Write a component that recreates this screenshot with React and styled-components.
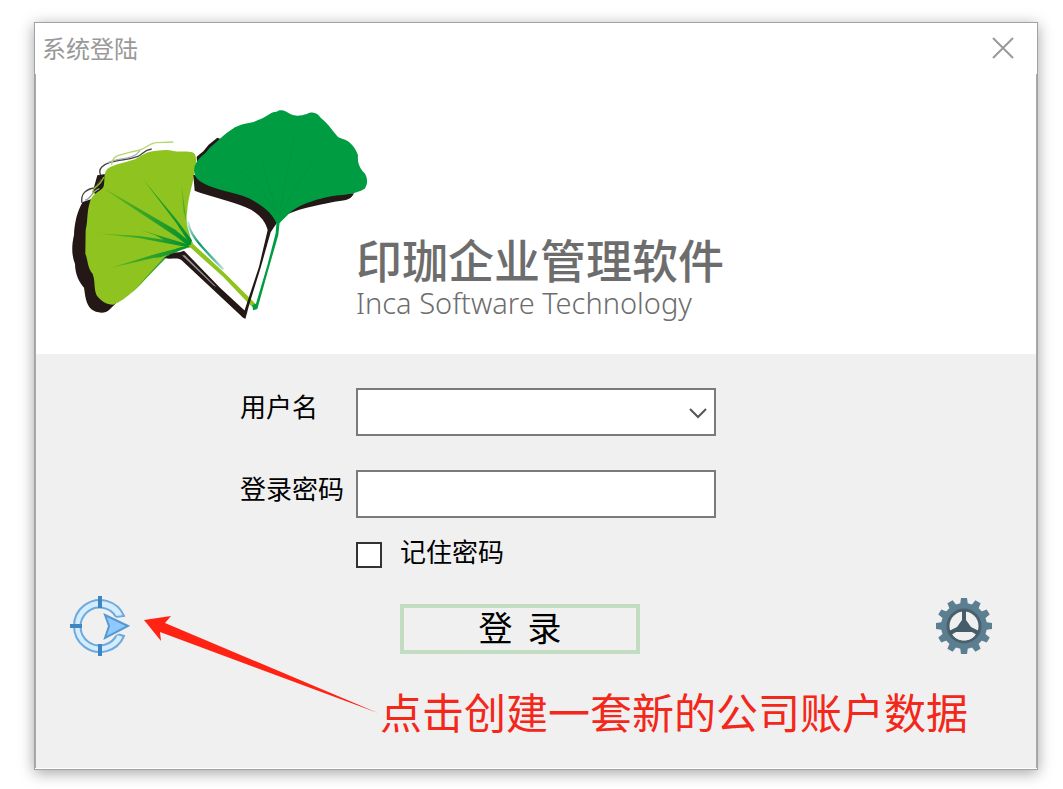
import React from "react";
import styled, { createGlobalStyle } from "styled-components";

const GlobalStyle = createGlobalStyle`
  *, *::before, *::after { box-sizing: border-box; }
  body {
    margin: 0;
    background: #fff;
    font-family: "Noto Sans CJK SC", sans-serif;
  }
`;

const Page = styled.main`
  padding: 22px 25px 19px 34px;
`;

const Dialog = styled.section`
  border: 1px solid #a2a4a4;
  background: #fff;
  box-shadow: 0 3px 14px rgba(0, 0, 0, 0.36);
`;

const TitleBar = styled.header`
  display: flex;
  align-items: center;
  justify-content: space-between;
  height: 51px;
  padding: 0 22px 2px 7px;
`;

const WindowTitle = styled.h1`
  margin: 0;
  font-size: 24px;
  line-height: 32px;
  font-weight: 400;
  color: #999;
`;

const CloseButton = styled.button`
  display: flex;
  padding: 0;
  border: 0;
  background: none;
  color: #999;
`;

const Body = styled.div`
  border: solid #a9a9a9;
  border-width: 0 1px;
  margin-bottom: 1px;
`;

const Banner = styled.div`
  display: flex;
  height: 280px;
  padding: 26px 0 0 32px;
`;

const Logo = styled.svg`
  flex: none;
  width: 288px;
  height: 230px;
  overflow: visible;
`;

const Brand = styled.div`
  padding-top: 132px;
  white-space: nowrap;
`;

const BrandName = styled.p`
  margin: 0;
  font-size: 46px;
  line-height: 52px;
  font-weight: 500;
  color: #6d6d6d;
`;

const BrandSub = styled.p`
  margin: 0;
  font-family: "Noto Sans", sans-serif;
  font-size: 29px;
  line-height: 38px;
  font-weight: 300;
  color: #6d6d6d;
`;

const LoginForm = styled.form`
  background: #f0f0f0;
  padding: 34px 0 28px;
`;

const Fields = styled.div`
  display: grid;
  grid-template-columns: 116px 360px;
  row-gap: 34px;
  padding-left: 204px;
`;

const Label = styled.label`
  font-size: 26px;
  line-height: 36px;
  color: #000;
  white-space: nowrap;
`;

const SelectWrap = styled.div`
  position: relative;
`;

const Chevron = styled.svg`
  position: absolute;
  right: 8px;
  top: 18px;
  pointer-events: none;
`;

const Control = styled.input`
  display: block;
  width: 100%;
  height: 48px;
  padding: 0 12px;
  border: 2px solid #7a7a7a;
  border-radius: 0;
  background: #fff;
  font: inherit;
  font-size: 26px;
  appearance: none;
`;

const Remember = styled.div`
  display: flex;
  gap: 18px;
  padding: 22px 0 0 320px;
`;

const Checkbox = styled.input`
  appearance: none;
  width: 26px;
  height: 26px;
  margin: 2px 0 0;
  border: 2px solid #333;
  background: #fff;
  &:checked { background: #333; }
`;

const RememberLabel = styled(Label)`
  line-height: 22px;
`;

const Actions = styled.div`
  display: flex;
  align-items: center;
  padding: 28px 44px 0 34px;
`;

const IconButton = styled.button`
  display: flex;
  padding: 0;
  border: 0;
  background: none;
  margin-left: ${(p) => (p.$end ? "auto" : "0")};
`;

const LoginButton = styled.button`
  width: 240px;
  height: 50px;
  margin: 6px 0 0 270px;
  padding: 0 0 4px;
  border: 4px solid #c1dcc1;
  background: #f0f0f0;
  font-family: inherit;
  font-size: 34px;
  line-height: 38px;
  color: #000;
  white-space: pre;
`;

const Note = styled.div`
  position: relative;
  padding: 26px 0 0 344px;
`;

const NoteText = styled.p`
  margin: 0;
  font-size: 42px;
  line-height: 58px;
  color: #f3271a;
  white-space: nowrap;
`;

const Arrow = styled.svg`
  position: absolute;
  left: 108px;
  top: -40px;
  pointer-events: none;
`;

function GinkgoLogo() {
  return (
    <Logo viewBox="24 0 864 690" role="img" aria-label="Inca">
      <defs>
        <linearGradient id="teal" gradientUnits="userSpaceOnUse" x1="385" y1="370" x2="500" y2="520">
          <stop offset="0" stopColor="#bfe6dc" />
          <stop offset=".35" stopColor="#00996b" />
          <stop offset=".7" stopColor="#5bbba5" />
          <stop offset="1" stopColor="#e5f5f0" />
        </linearGradient>
        <linearGradient id="veinLeft" gradientUnits="userSpaceOnUse" x1="100" y1="0" x2="390" y2="0">
          <stop offset="0" stopColor="#8fc31f" />
          <stop offset=".35" stopColor="#4cac26" />
          <stop offset="1" stopColor="#00912f" />
        </linearGradient>
      </defs>
      {/* shadow of the light leaf */}
      <path fill="#231815" d="M68 306 C52 332 43 370 42 405 C35 435 34 465 45 492 C46 525 57 545 72 563 C76 590 78 612 94 628 C107 639 136 643 148 629 L168 610 L110 560 L80 450 L85 340 L97 296 L86 300 Z" />
      <path fill="#231815" d="M112 226 L137 222 L134 255 L126 276 L110 285 L98 276 Z" />
      <g fill="none" stroke="#444" strokeWidth="4">
        <path d="M122 225 C112 205 132 193 150 187 C180 178 205 180 232 170 C248 164 250 150 275 147" />
        <path d="M145 188 C175 172 220 181 239 153" stroke="#aaa" />
        <path d="M66 309 C61 281 78 267 104 264 L124 238" />
        <path d="M75 300 C92 300 93 275 118 266" stroke="#999" />
      </g>
      <g fill="none" stroke="#b5d86a" strokeWidth="4">
        <path d="M155 195 C157 162 184 166 205 158 L240 150 C258 145 270 128 290 128 L340 126" />
        <path d="M98 283 C98 255 116 267 132 231" stroke="#8fc31f" />
      </g>
      {/* light leaf */}
      <path fill="#8fc31f" d="M138 212 C150 194 185 192 215 181 C240 174 248 160 270 155 C300 151 320 147 340 153 C360 157 380 151 397 157 C411 162 410 185 404 210 C402 245 384 290 382 330 C375 370 384 402 404 440 C370 446 340 454 313 471 C286 500 251 549 220 574 C200 591 181 607 160 614 C139 614 121 602 109 584 C101 563 106 542 98 522 C81 501 85 484 76 461 L77 390 C84 362 80 335 90 305 C96 281 118 277 130 262 C136 245 130 224 138 212 Z" />
      <g fill="url(#veinLeft)">
        <path d="M138 268 L346 389 L394 430 L388 440 L350 411 L138 271 Z" />
        <path d="M90 398 L240 408 L310 419 L285 405 L240 389 L390 435 L380 441 L240 415 Z" />
        <path d="M147 505 L290 461 L390 436 L330 462 L302 472 L280 474 Z" />
        <path d="M248 236 L350 359 L396 421 L391 434 L348 368 Z" />
        <path d="M364 254 L373 315 L384 397 L396 429 L371 335 Z" opacity=".45" />
        <path d="M313 471 L353 444 L399 436 L326 466 L295 497 L210 585 Z" />
      </g>
      {/* shadow of the light leaf's stem */}
      <path fill="#231815" d="M313 474 C330 461 345 456 358 457 L372 452 L480 563 L553 631 L562 636 L551 655 L364 480 C350 471 333 480 313 474 Z" />
      <path fill="#9d9997" d="M374 466 L470 562 L460 556 L366 466 Z" />
      <path stroke="url(#teal)" strokeWidth="7" fill="none" d="M384 365 C389 399 404 421 490 508" />
      <path fill="#8fc31f" d="M385 436 L402 434 L500 525 L590 615 L587 628 L570 615 L490 531 L397 448 Z" />
      {/* shadow of the dark leaf and its stem */}
      <path fill="#231815" d="M410 170 L430 154 L446 134 L472 113 L484 118 L450 160 L412 200 Z M400 225 L404 272 C440 286 485 296 522 309 C568 322 612 345 623 390 L597 500 L554 630 L545 649 L556 657 L568 613 L602 503 L632 397 L654 364 L640 330 L560 280 L440 245 L404 225 Z M665 353 C710 324 770 318 816 307 C850 300 872 304 882 280 L820 280 L720 310 Z" />
      {/* dark leaf */}
      <path fill="#009c42" d="M402 210 C405 176 434 167 448 145 C471 126 491 103 525 82 C554 67 572 72 594 60 C619 53 628 36 650 35 C664 25 679 34 691 42 C708 51 725 46 741 42 C759 31 774 41 782 53 C801 67 815 88 829 105 C839 119 849 113 864 124 C882 139 889 151 894 166 C892 186 897 200 908 214 C925 228 924 252 914 266 C890 281 854 284 824 287 C770 296 709 315 683 345 L659 369 L648 367 C635 337 600 312 565 294 C518 274 470 271 433 251 C411 240 404 231 402 210 Z" />
      <g stroke="#04953e" strokeWidth="3" fill="none">
        <path d="M703 115 L686 197 L658 340" />
        <path d="M604 170 L622 249 L650 330" />
        <path d="M535 207 L602 267 L647 338" />
        <path d="M755 188 L700 275 L661 340" />
      </g>
      <path fill="#009c42" d="M650 360 L659 366 L655 405 L623 516 L592 627 L579 631 L577 615 L588 611 L622 496 L647 400 Z" />
    </Logo>
  );
}

function CompassIcon() {
  return (
    <svg width="60" height="60" viewBox="0 1 60 60" aria-hidden="true">
      <path d="M54 21 A26 26 0 1 0 54 41 L47 39 A19 19 0 1 1 46 22 Z" fill="#d3ecff" stroke="#6eaadb" strokeWidth="2" />
      <path d="M30 1 V13 M0 31 H12 M30 49 V61" stroke="#3f85bf" strokeWidth="4" />
      <path d="M35 20 L58 31 L35 43 L39 31 Z" fill="#8ecaff" stroke="#f0f0f0" strokeWidth="5" />
      <path d="M35 20 L58 31 L35 43 L39 31 Z" fill="#8ecaff" stroke="#5798d0" strokeWidth="2" />
    </svg>
  );
}

const TEETH = Array.from({ length: 12 }, (_, i) => i * 30);

function GearIcon() {
  return (
    <svg width="56" height="56" viewBox="-28 -28 56 56" aria-hidden="true">
      <g fill="#5b7f91">
        <circle r="23" />
        {TEETH.map((angle) => (
          <path key={angle} d="M-4 -21 L-3 -28 H3 L4 -21 Z" transform={`rotate(${angle})`} />
        ))}
      </g>
      <circle r="16" fill="#f0f0f0" stroke="#4a606d" strokeWidth="3" />
      <path d="M-2 -16 H2 V-6 L7 1 L15 5 L13 9 L8 6 H-8 L-13 9 L-15 5 L-7 1 L-2 -6 Z" fill="#455c69" />
      <path d="M-11 9 C-7 6 7 6 11 9 C7 16 -7 16 -11 9 Z" fill="#f0f0f0" />
    </svg>
  );
}

export default function App() {
  return (
    <>
      <GlobalStyle />
      <Page>
        <Dialog>
          <TitleBar>
            <WindowTitle>系统登陆</WindowTitle>
            <CloseButton type="button" aria-label="关闭">
              <svg width="24" height="24" viewBox="0 0 24 24" fill="none" stroke="currentColor" strokeWidth="2">
                <path d="M2 2 L22 22 M22 2 L2 22" />
              </svg>
            </CloseButton>
          </TitleBar>
          <Body>
            <Banner>
              <GinkgoLogo />
              <Brand>
                <BrandName>印珈企业管理软件</BrandName>
                <BrandSub>Inca Software Technology</BrandSub>
              </Brand>
            </Banner>
            <LoginForm onSubmit={(e) => e.preventDefault()}>
              <Fields>
                <Label htmlFor="user">用户名</Label>
                <SelectWrap>
                  <Control as="select" id="user" defaultValue="">
                    <option value=""></option>
                  </Control>
                  <Chevron width="20" height="14" viewBox="0 0 20 14" fill="none" stroke="#555" strokeWidth="2">
                    <path d="M2 3 L10 11 L18 3" />
                  </Chevron>
                </SelectWrap>
                <Label htmlFor="password">登录密码</Label>
                <Control id="password" type="password" />
              </Fields>
              <Remember>
                <Checkbox id="remember" type="checkbox" />
                <RememberLabel htmlFor="remember">记住密码</RememberLabel>
              </Remember>
              <Actions>
                <IconButton type="button" aria-label="创建账户数据">
                  <CompassIcon />
                </IconButton>
                <LoginButton type="submit">{"登  录"}</LoginButton>
                <IconButton type="button" aria-label="设置" $end>
                  <GearIcon />
                </IconButton>
              </Actions>
              <Note>
                <Arrow width="236" height="98" viewBox="0 0 236 98" aria-hidden="true">
                  <path d="M0 4 L27 0 L21 7 L234 97 L16 16 L17 25 Z" fill="#ff2313" />
                </Arrow>
                <NoteText>点击创建一套新的公司账户数据</NoteText>
              </Note>
            </LoginForm>
          </Body>
        </Dialog>
      </Page>
    </>
  );
}
